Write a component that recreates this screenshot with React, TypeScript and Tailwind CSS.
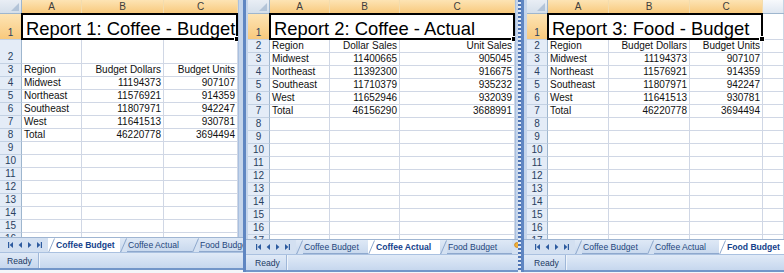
import React from 'react';

type Cells = [string, string, string];
type Row = { n: number; h: string; cells?: Cells; title?: string };

const coffeeBudget: Cells[] = [
  ['Midwest', '11194373', '907107'],
  ['Northeast', '11576921', '914359'],
  ['Southeast', '11807971', '942247'],
  ['West', '11641513', '930781'],
  ['Total', '46220778', '3694494'],
];

const coffeeActual: Cells[] = [
  ['Midwest', '11400665', '905045'],
  ['Northeast', '11392300', '916675'],
  ['Southeast', '11710379', '935232'],
  ['West', '11652946', '932039'],
  ['Total', '46156290', '3688991'],
];

const foodBudget: Cells[] = [
  ['Midwest', '11194373', '907107'],
  ['Northeast', '11576921', '914359'],
  ['Southeast', '11807971', '942247'],
  ['West', '11641513', '930781'],
  ['Total', '46220778', '3694494'],
];

function buildRows(title: string, header: Cells, data: Cells[], blankRow2: boolean, last: number): Row[] {
  const rows: Row[] = [{ n: 1, h: 'h-[26px]', title }];
  let n = 2;
  if (blankRow2) rows.push({ n: n++, h: 'h-[24px]' });
  rows.push({ n: n++, h: 'h-[13px]', cells: header });
  data.forEach((d) => rows.push({ n: n++, h: 'h-[13px]', cells: d }));
  while (n <= last) rows.push({ n: n++, h: 'h-[13px]' });
  return rows;
}

function Sheet({
  hdr,
  cols,
  span,
  extra,
  rows,
  height,
}: {
  hdr: string;
  cols: [string, string, string];
  span: string;
  extra?: string;
  rows: Row[];
  height: string;
}) {
  return (
    <div className={`${height} overflow-hidden bg-white`}>
      {/* column headers */}
      <div className="flex h-[14px] border-b border-[#9eb6ce]">
        <div className={`${hdr} relative shrink-0 bg-gradient-to-b from-[#e9eef5] to-[#d5dfea] border-r border-[#9eb6ce]`}>
          <svg className="absolute right-[2px] bottom-[2px]" width="8" height="8" viewBox="0 0 8 8">
            <polygon points="8,0 8,8 0,8" fill="#b3c4d8" />
          </svg>
        </div>
        {cols.map((c, i) => (
          <div
            key={i}
            className={`${c} shrink-0 flex items-center justify-center border-r border-[#f3dcae] bg-gradient-to-b from-[#fde4b4] to-[#f8c97c] text-[10px] leading-[12px] text-[#3d3d3d]`}
          >
            {'ABC'[i]}
          </div>
        ))}
        {extra && (
          <div className={`${extra} shrink-0 bg-gradient-to-b from-[#f7f9fc] to-[#dfe7f1] border-r border-[#c5d3e3]`} />
        )}
      </div>

      {rows.map((r) => (
        <div key={r.n} className={`flex ${r.h}`}>
          <div
            className={`${hdr} shrink-0 flex items-end justify-center pb-px border-r border-r-[#9eb6ce] border-b border-b-[#c3d1e3] text-[10px] leading-[11px] text-[#2a3f5f] ${
              r.n === 1 ? 'bg-gradient-to-b from-[#fde4b4] to-[#f8c97c]' : 'bg-[#e4ecf7]'
            }`}
          >
            {r.n}
          </div>
          {r.title ? (
            <div className={`${span} shrink-0 relative flex items-end pl-[4px] border-r border-b border-[#d0d7e5]`}>
              <span className="text-[18.4px] leading-[21px] text-black whitespace-nowrap">{r.title}</span>
              <div className="absolute -top-px -left-px -right-px -bottom-px border-2 border-black" />
              <div className="absolute -right-[3px] -bottom-[3px] w-[6px] h-[6px] bg-black border border-white z-10" />
            </div>
          ) : (
            cols.map((c, i) => (
              <div
                key={i}
                className={`${c} shrink-0 flex items-end pb-px px-[2px] border-r border-b border-[#d0d7e5] text-[10px] leading-[11px] text-[#111] whitespace-nowrap overflow-hidden ${
                  i === 0 ? 'justify-start' : 'justify-end'
                }`}
              >
                {r.cells ? r.cells[i] : ''}
              </div>
            ))
          )}
          {extra && <div className={`${extra} shrink-0 border-r border-b border-[#d0d7e5]`} />}
        </div>
      ))}
    </div>
  );
}

function Nav() {
  const c = '#2d5b9f';
  return (
    <svg width="40" height="14" viewBox="0 0 40 14" className="shrink-0">
      <rect x="3" y="4" width="1.2" height="6" fill={c} />
      <polygon points="8,4 8,10 4.6,7" fill={c} />
      <polygon points="17,4 17,10 13.6,7" fill={c} />
      <polygon points="23,4 23,10 26.4,7" fill={c} />
      <polygon points="32,4 32,10 35.4,7" fill={c} />
      <rect x="35.8" y="4" width="1.2" height="6" fill={c} />
    </svg>
  );
}

function Tab({ label, active }: { label: string; active: boolean }) {
  return (
    <div
      className={`relative shrink-0 w-[72px] h-full flex items-center pl-[8px] ${
        active ? 'bg-white' : 'bg-gradient-to-b from-[#dfe9f6] to-[#c9d9ee] border-b border-[#8ea8cd]'
      }`}
    >
      <svg className="absolute left-0 top-0" width="7" height="15" viewBox="0 0 7 15">
        <polygon points="0,15 6,0 7,0 7,15" fill={active ? '#ffffff' : '#d4e1f2'} />
        <line x1="0.5" y1="14.5" x2="6.5" y2="0.5" stroke="#8ea8cd" strokeWidth="1" />
      </svg>
      <span
        className={`relative whitespace-nowrap text-[8.6px] leading-[10px] ${
          active ? 'font-bold text-[#15428b]' : 'text-[#24467c]'
        }`}
      >
        {label}
      </span>
    </div>
  );
}

const tabNames = ['Coffee Budget', 'Coffee Actual', 'Food Budget'];

function TabBar({ active, lead, plus }: { active: number; lead: string; plus?: boolean }) {
  return (
    <div className="flex h-[15px] bg-[#d3e0f1] border-t border-[#9fb5d2] overflow-hidden">
      <div className={`${lead} shrink-0`} />
      <Nav />
      <div className="w-[3px] shrink-0" />
      {tabNames.map((t, i) => (
        <Tab key={t} label={t} active={i === active} />
      ))}
      {plus && (
        <svg className="shrink-0 ml-[1px]" width="8" height="14" viewBox="0 0 8 14">
          <circle cx="4" cy="5" r="2.4" fill="#f4b43c" stroke="#c97f10" strokeWidth="0.8" />
        </svg>
      )}
    </div>
  );
}

function StatusBar({ lead }: { lead: string }) {
  return (
    <div className="flex h-[16px] items-center bg-gradient-to-b from-[#e0eaf7] to-[#c6d7ee] border-t border-[#aac1e0]">
      <div className={`${lead} shrink-0`} />
      <span className="w-[36px] shrink-0 pl-[5px] text-[8.6px] leading-[10px] text-[#1c3a63]">Ready</span>
      <div className="w-px h-full bg-[#9fb7d8]" />
      <div className="w-px h-full bg-[#eef4fb]" />
    </div>
  );
}

export default function App() {
  const rows1 = buildRows('Report 1: Coffee - Budget', ['Region', 'Budget Dollars', 'Budget Units'], coffeeBudget, true, 16);
  const rows2 = buildRows('Report 2: Coffee - Actual', ['Region', 'Dollar Sales', 'Unit Sales'], coffeeActual, false, 17);
  const rows3 = buildRows('Report 3: Food - Budget', ['Region', 'Budget Dollars', 'Budget Units'], foodBudget, false, 17);

  return (
    <div className="flex w-[784px] h-[273px] overflow-hidden bg-[#f4f6f9] font-['Liberation_Sans',Arial,sans-serif]">
      {/* Window 1 */}
      <div className="flex flex-col w-[243px] h-[270px] shrink-0 bg-[#c5d5eb] border-b-2 border-[#7396c9]">
        <div className="flex">
          <div className="w-[238px] shrink-0">
            <Sheet
              hdr="w-[22px]"
              cols={['w-[60px]', 'w-[82px]', 'w-[74px]']}
              span="w-[216px]"
              rows={rows1}
              height="h-[237px]"
            />
          </div>
          <div className="w-[5px] shrink-0 border-l border-[#a9c0e0]" />
        </div>
        <TabBar active={0} lead="w-[5px]" />
        <StatusBar lead="w-[2px]" />
      </div>

      {/* divider */}
      <div className="w-[3px] shrink-0 h-[272px] bg-[#5f86c2]" />

      {/* Window 2 */}
      <div className="flex flex-col w-[272px] h-[272px] shrink-0 bg-[#c5d5eb] border-b-2 border-[#7396c9]">
        <div className="flex">
          <div className="w-[2px] shrink-0" />
          <div className="w-[267px] shrink-0">
            <Sheet
              hdr="w-[22px]"
              cols={['w-[60px]', 'w-[70px]', 'w-[115px]']}
              span="w-[245px]"
              rows={rows2}
              height="h-[239px]"
            />
          </div>
          <div className="w-[3px] shrink-0 border-l border-[#a9c0e0]" />
        </div>
        <TabBar active={1} lead="w-[7px]" plus />
        <StatusBar lead="w-[4px]" />
      </div>

      {/* split strip */}
      <div className="w-[3px] shrink-0 h-[272px] bg-[repeating-linear-gradient(to_bottom,#4f74b3_0px,#4f74b3_2px,#e3ebf6_2px,#e3ebf6_4px)]" />
      <div className="w-[3px] shrink-0 h-[272px] bg-[#5f86c2]" />

      {/* Window 3 */}
      <div className="flex flex-col w-[260px] h-[272px] shrink-0 bg-[#c5d5eb] border-b-2 border-[#7396c9]">
        <div className="flex">
          <div className="w-[3px] shrink-0" />
          <div className="w-[257px] shrink-0">
            <Sheet
              hdr="w-[21px]"
              cols={['w-[61px]', 'w-[81px]', 'w-[73px]']}
              span="w-[215px]"
              extra="w-[21px]"
              rows={rows3}
              height="h-[239px]"
            />
          </div>
        </div>
        <TabBar active={2} lead="w-[8px]" />
        <StatusBar lead="w-[5px]" />
      </div>
    </div>
  );
}
